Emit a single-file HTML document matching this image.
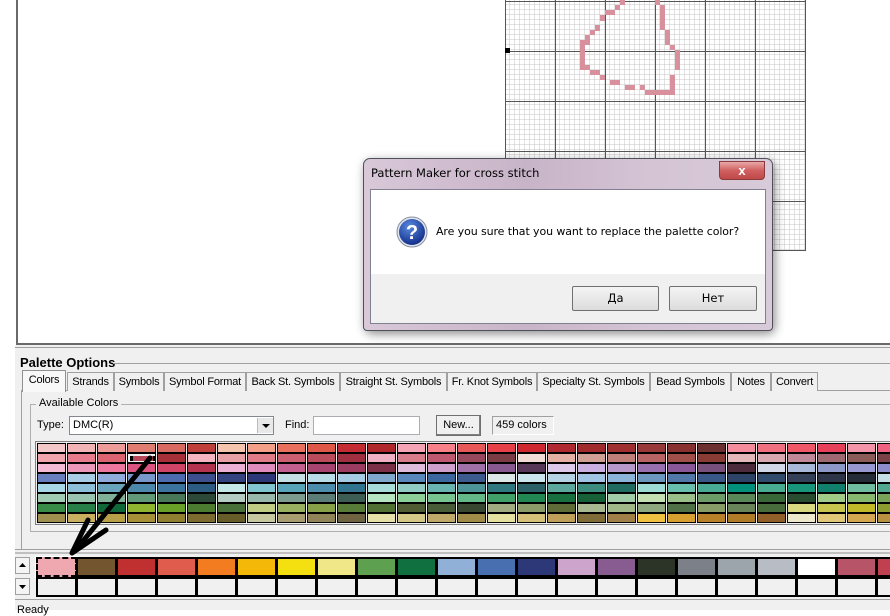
<!DOCTYPE html>
<html><head><meta charset="utf-8"><style>
*{margin:0;padding:0;box-sizing:border-box}
body{width:890px;height:610px;overflow:hidden;background:#fff;font-family:"Liberation Sans",sans-serif;font-size:12px;color:#000;position:relative}
.abs{position:absolute;white-space:nowrap}
#canvas{left:16px;top:0;width:874px;height:345px;background:#fff;border-left:2px solid #6a6a6a;border-bottom:2px solid #6a6a6a}
#panel{left:15px;top:345px;width:875px;height:265px;background:#f0f0f0}
.tab{position:absolute;top:372px;height:19px;border:1px solid #a0a0a0;border-bottom:none;background:#f0f0f0;padding:3px 0 0;font-size:11px;white-space:nowrap;text-align:center;overflow:hidden;letter-spacing:-0.2px}
.cell{position:absolute;border:1px solid #000;}
.btn{position:absolute;border:1px solid #707070;background:linear-gradient(#f4f4f4,#dcdcdc);text-align:center;font-size:12px;border-radius:2px}
</style></head><body>
<div id="canvas" class="abs"></div>
<svg class="abs" style="left:505px;top:0" width="302" height="252">
<defs>
<pattern id="mn" width="5" height="5" patternUnits="userSpaceOnUse"><path d="M5 0V5M0 5H5" stroke="#c4c4c4" stroke-width="1" fill="none"/></pattern>
<pattern id="mj" width="50" height="50" x="0" y="1" patternUnits="userSpaceOnUse"><path d="M0.5 0V50M0 0.5H50" stroke="#555" stroke-width="1" fill="none"/></pattern>
</defs>
<rect width="301" height="251" fill="#fff"/>
<rect width="301" height="251" fill="url(#mn)"/>
<rect width="301" height="251" fill="url(#mj)"/>
<path d="M300.5 0V251M0 250.5H301" stroke="#555"/>
<g fill="#d8909c">
<rect x="115" y="0" width="5" height="5"/><rect x="110" y="5" width="5" height="5"/><rect x="100" y="10" width="10" height="5"/><rect x="95" y="15" width="5" height="6"/>
<rect x="90" y="25" width="5" height="6"/><rect x="85" y="30" width="5" height="5"/><rect x="80" y="35" width="5" height="10"/><rect x="75" y="40" width="5" height="30"/>
<rect x="80" y="65" width="5" height="5"/><rect x="85" y="70" width="10" height="5"/><rect x="95" y="75" width="5" height="5"/><rect x="105" y="80" width="10" height="5"/>
<rect x="120" y="85" width="10" height="5"/><rect x="135" y="85" width="5" height="5"/><rect x="140" y="90" width="30" height="5"/><rect x="165" y="75" width="5" height="15"/>
<rect x="170" y="50" width="5" height="20"/><rect x="165" y="45" width="5" height="5"/><rect x="160" y="30" width="5" height="15"/><rect x="155" y="5" width="5" height="25"/><rect x="150" y="0" width="5" height="5"/>
</g>
<rect x="0" y="48" width="5" height="5" fill="#000"/>
</svg>
<div id="panel" class="abs"></div>
<div class="abs" style="left:15px;top:347px;width:875px;border-top:1px solid #a0a0a0"></div>
<div class="abs" style="left:20px;top:355px;font-weight:bold;font-size:13px">Palette Options</div>
<div class="abs" style="left:113px;top:363px;width:777px;border-top:1px solid #a0a0a0"></div>
<div class="abs" style="left:21px;top:390px;width:869px;height:160px;border:1px solid #a0a0a0;border-right:none;background:#f0f0f0"></div>
<div class="tab" style="left:22px;top:370px;height:22px;width:44px;background:#f8f8f8;z-index:2;border-color:#909090">Colors</div>
<div class="tab" style="left:67px;width:47px">Strands</div>
<div class="tab" style="left:114px;width:50px">Symbols</div>
<div class="tab" style="left:164px;width:82px">Symbol Format</div>
<div class="tab" style="left:246px;width:94px">Back St. Symbols</div>
<div class="tab" style="left:340px;width:107px">Straight St. Symbols</div>
<div class="tab" style="left:447px;width:90px">Fr. Knot Symbols</div>
<div class="tab" style="left:537px;width:113px">Specialty St. Symbols</div>
<div class="tab" style="left:650px;width:81px">Bead Symbols</div>
<div class="tab" style="left:731px;width:40px">Notes</div>
<div class="tab" style="left:771px;width:47px">Convert</div>
<div class="abs" style="left:30px;top:404px;width:860px;height:128px;border:1px solid #b0b0b0;border-right:none"></div>
<div class="abs" style="left:36px;top:397px;background:#f0f0f0;padding:0 3px;font-size:11px">Available Colors</div>
<div class="abs" style="left:37px;top:419px;font-size:11px">Type:</div>
<div class="abs" style="left:69px;top:416px;width:205px;height:19px;border:1px solid #828790;background:#fff;padding:2px 3px;font-size:11px">DMC(R)</div>
<div class="abs" style="left:257px;top:418px;width:16px;height:15px;background:#e8e8e8;border-left:1px solid #bbb"><svg width="16" height="15"><path d="M4 6h8l-4 4z" fill="#000"/></svg></div>
<div class="abs" style="left:285px;top:419px;font-size:11px">Find:</div>
<div class="abs" style="left:313px;top:416px;width:107px;height:19px;border:1px solid #abadb3;background:#fff"></div>
<div class="btn" style="left:436px;top:415px;width:45px;height:21px;padding-top:3px;border-radius:0;background:#f0f0f0;box-shadow:inset -1px -1px #808080;font-size:11px">New...</div>
<div class="abs" style="left:492px;top:416px;width:62px;height:19px;border:1px solid #fff;border-left-color:#a0a0a0;border-top-color:#a0a0a0;padding:2px 3px;font-size:11px">459 colors</div>
<div class="abs" style="left:35px;top:441px;width:855px;height:84px;border:1px solid #808080;border-right:none;background:#f0f0f0"></div>
<div id="grid"></div>
<div class="abs" style="left:15px;top:549px;width:875px;border-top:1px solid #a0a0a0"></div>
<div class="abs" style="left:15px;top:552px;width:875px;border-top:2px solid #c0c0c0"></div>
<div class="abs" style="left:15px;top:557px;width:15px;height:17px;border:1px solid #a0a0a0;background:#f4f4f4"><svg width="13" height="15"><path d="M3 9h7l-3.5-4z" fill="#000"/></svg></div>
<div class="abs" style="left:15px;top:578px;width:15px;height:17px;border:1px solid #a0a0a0;background:#f4f4f4"><svg width="13" height="15"><path d="M3 6h7l-3.5 4z" fill="#000"/></svg></div>
<div id="bot"></div>
<div class="abs" style="left:15px;top:599px;width:875px;border-top:1px solid #a0a0a0"></div>
<div class="abs" style="left:17px;top:604px;font-size:11px">Ready</div>
<svg class="abs" style="left:0;top:0" width="890" height="610">
<path d="M150 458 L75 551" stroke="#000" stroke-width="5" stroke-linecap="round"/>
<path d="M72 553 L88 520 M72 553 L106 530" stroke="#000" stroke-width="5" stroke-linecap="round"/>
</svg>
<!-- dialog -->
<div class="abs" style="left:363px;top:158px;width:410px;height:173px;border-radius:7px;box-shadow:2px 3px 10px rgba(0,0,0,.45)"></div>
<div class="abs" style="left:363px;top:158px;width:410px;height:173px;border:1px solid #50505a;border-radius:7px 7px 4px 4px;background:linear-gradient(90deg,#d8c8d8,#c8b4c8 40%,#d4c4d4 70%,#d8cad8)"></div>
<div class="abs" style="left:371px;top:166px;font-family:'DejaVu Sans',sans-serif;font-size:11.5px">Pattern Maker for cross stitch</div>
<div class="abs" style="left:719px;top:161px;width:46px;height:19px;border:1px solid #8a3a3a;border-radius:0 0 4px 4px;background:linear-gradient(#e8a8a8,#d06060 50%,#c04848);color:#fff;text-align:center;font-weight:bold;font-size:13px;line-height:17px">x</div>
<div class="abs" style="left:370px;top:189px;width:396px;height:135px;border:1px solid #808090;background:#f0f0f0"></div>
<div class="abs" style="left:371px;top:190px;width:394px;height:84px;background:#fff"></div>
<svg class="abs" style="left:396px;top:216px" width="32" height="32"><defs><radialGradient id="q" cx="40%" cy="30%" r="70%"><stop offset="0" stop-color="#5a8ae0"/><stop offset="1" stop-color="#14308c"/></radialGradient></defs><circle cx="16" cy="16" r="15" fill="#e0e4ec" stroke="#8890a0"/><circle cx="16" cy="16" r="13" fill="url(#q)"/><text x="16" y="23" fill="#fff" font-family="Liberation Sans" font-weight="bold" font-size="20" text-anchor="middle">?</text></svg>
<div class="abs" style="left:436px;top:225px;font-family:'DejaVu Sans',sans-serif;font-size:11px;letter-spacing:-0.1px">Are you sure that you want to replace the palette color?</div>
<div class="btn" style="left:572px;top:286px;width:87px;height:25px;line-height:23px;font-family:'DejaVu Sans',sans-serif;font-size:11.5px">Да</div>
<div class="btn" style="left:669px;top:286px;width:88px;height:25px;line-height:23px;font-family:'DejaVu Sans',sans-serif;font-size:11.5px">Нет</div>
<script>
var R=[
"#f4c8c8 #f2b4b4 #ee9c98 #e07c70 #d86a62 #c0403c #f4c4ac #f4a088 #e8705c #e05848 #c42c34 #b0282c #f4a4b4 #f88088 #e85858 #e84048 #d02830 #b02830 #a02a2c #a03030 #983838 #883030 #6c3030 #f48c9c #f07080 #f05868 #e84058 #f494a8 #f06080",
"#f0a4ac #e87c8c #dc6470 #f0f0f0 #a83038 #f4b4c0 #e8a0a4 #e07c88 #cc6070 #bc4c5c #a03040 #f0b0c4 #d87c8c #c05870 #98485c #7c3c44 #f0dcd4 #e4b0a4 #d0a094 #c08078 #b86464 #a05048 #883c34 #e4b8b8 #d8a8b0 #c08898 #a06870 #8c5c58 #7c4048",
"#f4bcd4 #ec98b8 #ec78a0 #dc5480 #d04468 #b43450 #ecb0d4 #e08cbc #c46090 #a84470 #9c3c60 #7c3048 #e0bcdc #d0a0cc #a070a8 #885890 #583858 #dcc8e8 #c8b0e0 #b898c8 #9870b0 #885898 #78507c #4c2c3c #d0d8e8 #a8b8d8 #8c98c8 #9898d0 #8c8cc8",
"#6880c0 #a8cce4 #90acdc #7898cc #4c6cb0 #3c5090 #344480 #2c3878 #c4e0e4 #b8dce8 #a4cce4 #80a8cc #5888bc #3c68a0 #3c5c90 #dce8e8 #cce4ec #b4d4e4 #a0c4e4 #8cb4d8 #6c98c0 #5078a8 #385888 #2c4468 #304c6c #344058 #2c3448 #242c38 #c4dce4",
"#a8d8e8 #8cc0d8 #68a4bc #4c88ac #3c74a0 #2c5c84 #c4e8e8 #80c4d0 #58a4b8 #4c8cac #307490 #a8dcd8 #90ccc4 #68b4b0 #4c9498 #307880 #2c6068 #5ca89c #3c8c80 #206c60 #9cdcd4 #68c0ac #48ac94 #00907c #48ac90 #18967c #10806c #70bca0 #50a890",
"#a0ccb4 #98c4b0 #80b098 #609878 #487858 #2c4838 #b4ccc4 #98b8ac #7c9c90 #5c7c78 #3c5c54 #b4e4c0 #8cd098 #78c490 #64b888 #40a068 #208850 #187040 #186038 #a0cca8 #c4e0b0 #98c088 #6c9c68 #588858 #386838 #284c30 #a0cc88 #88b870 #78a458",
"#388c48 #288048 #106838 #90b430 #68a028 #4c7c30 #487038 #c0cc84 #98b060 #88a048 #587c38 #507034 #505c34 #485c38 #384830 #a0ac80 #8c9c68 #606c38 #a8b890 #a0b888 #90a880 #507048 #889c68 #688458 #486c3c #d8d880 #c8c450 #c0b828 #8c9c30",
"#a09050 #c8b060 #b8a048 #a89038 #908030 #7c6c30 #685c28 #c8c8a0 #a89c70 #908458 #706440 #e4e0a8 #d4c888 #c0a868 #a08c48 #e4e0a0 #d4c078 #c0a058 #806c38 #a08048 #f0c040 #d8a030 #b88028 #b07c28 #906028 #ece8cc #e0c878 #d4a850 #b89040"];
var h='';
R.forEach(function(r,i){r.split(' ').forEach(function(c,j){
h+='<div class="cell" style="left:'+(37+30*j)+'px;top:'+(443+10*i)+'px;width:29px;height:10px;background:'+c+'"></div>';});});
h+='<div class="abs" style="left:130px;top:456px;width:26px;height:5px;background:#b84858;border-left:3px solid #000;border-right:3px solid #000"></div>';
document.getElementById('grid').innerHTML=h;
var B="#f0a8b0 #735530 #c03030 #e05c4c #f47c20 #f4b808 #f4e010 #f0e888 #5ca050 #107040 #90b0d8 #4870b0 #2c3878 #cca4cc #885c90 #2c3428 #7c8088 #9ca4ac #b8bcc4 #ffffff #b85468 #c04050".split(' ');
var g='';
B.forEach(function(c,j){
g+='<div class="cell" style="left:'+(36+40*j)+'px;top:557px;width:41px;height:20px;border-width:2px;background:'+c+(j==0?';border:2px dashed #000;outline:1px solid #fff':'')+'"></div>';
g+='<div class="cell" style="left:'+(36+40*j)+'px;top:577px;width:41px;height:20px;border-width:2px;background:#f0f0f0"></div>';});
document.getElementById('bot').innerHTML=g;
</script>
</body></html>
